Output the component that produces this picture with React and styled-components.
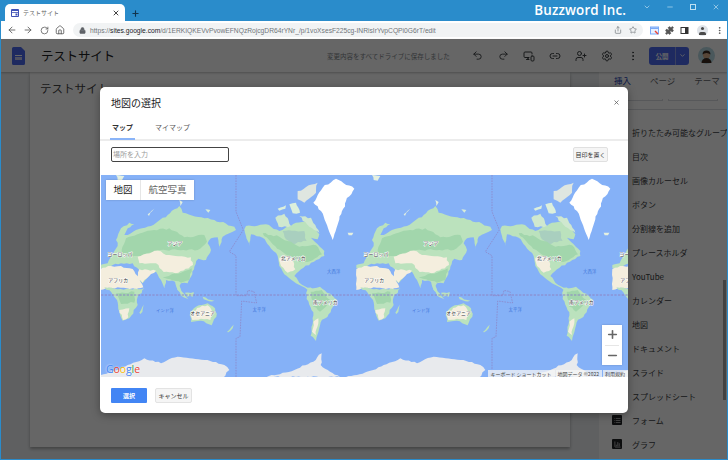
import React from "react";
import styled, { createGlobalStyle } from "styled-components";
import { ArrowLeft, ArrowRight, RotateCw, Home, Lock, Share, Star, Puzzle, Undo2, Redo2, MonitorSmartphone, Link2, UserPlus, Settings, MoreVertical, X, Plus, Minus, ChevronDown, List, BarChart3 } from "lucide-react";

const JP = `"Noto Sans CJK JP", "Noto Sans", "Liberation Sans", sans-serif`;

const Global = createGlobalStyle`
  html, body { margin: 0; padding: 0; width: 728px; height: 460px; overflow: hidden; background: #2a8ccb; }
  * { box-sizing: border-box; }
`;

const Win = styled.div`
  width: 728px; height: 460px; display: flex; flex-direction: column;
  border: solid #2a8ccb; border-width: 0 1px 1px 1px; font-family: ${JP}; overflow: hidden;
`;
const TitleBar = styled.div`
  height: 21px; flex: none; background: #2a8ccb; display: flex; align-items: flex-end; padding-left: 4px; color: #fff;
`;
const Tab = styled.div`
  width: 120px; height: 17px; background: #fff; border-radius: 5px 5px 0 0; display: flex; align-items: center; padding: 0 5px 0 6px; gap: 4px; color: #666; font-size: 6px;
`;
const TabIcon = styled.svg` width: 8px; height: 8px; flex: none; `;
const TabTitle = styled.span` flex: 1; `;
const NewTab = styled.div` margin: 5px 0 0 6px; align-self: center; display: flex; color: #12344d; `;
const Brand = styled.div`
  margin-left: auto; margin-right: 17px; align-self: flex-start; font: 600 13.4px/21px "Open Sans", sans-serif; letter-spacing: .15px; color: #fff;
`;
const WinControls = styled.div` display: flex; align-self: flex-start; margin-top: 3px; margin-right: 7px; gap: 15px; align-items: center; color: #bfe0f2; `;
const Toolbar = styled.div`
  height: 18px; flex: none; background: #fff; display: flex; align-items: center; padding: 0 3px; color: #555;
`;
const NavBtn = styled.div` width: 16px; display: flex; justify-content: center; color: #555; `;
const Omni = styled.div`
  width: 570px; height: 14px; margin: 0 7px 0 5px; background: #f1f3f4; border-radius: 7px; display: flex; align-items: center; padding: 0 6px; gap: 4px;
  font: 6.7px "Liberation Sans", sans-serif; color: #70757a; white-space: nowrap;
`;
const Url = styled.span` flex: 1; b { font-weight: 400; color: #202124; } `;
const OmniIcons = styled.span` display: flex; gap: 7px; align-items: center; `;
const ExtIcons = styled.div` display: flex; align-items: center; gap: 6px; `;
const Avatar = styled.span` width: 11px; height: 11px; border-radius: 50%; background: #dfe3e8; display: block; margin: 0 1px 0 2px; position: relative; overflow: hidden;
  &::after { content: ""; position: absolute; left: 2px; right: 2px; bottom: 1px; height: 3px; border-radius: 2px 2px 0 0; background: #4a4a4a; }
  &::before { content: ""; position: absolute; left: 4px; top: 2px; width: 3px; height: 3px; border-radius: 50%; background: #4a4a4a; }
`;

const Page = styled.div` flex: 1; position: relative; background: #fff; display: flex; flex-direction: column; min-height: 0; `;
const Header = styled.div`
  height: 33px; flex: none; background: #fff; display: flex; align-items: center; padding-left: 11px; box-shadow: 0 1px 2px rgba(0,0,0,.25); position: relative; z-index: 1;
`;
const DocIcon = styled.svg` width: 13px; height: 18px; flex: none; margin-right: 16px; `;
const SiteTitle = styled.div` font-size: 12.5px; color: #202124; width: 286px; letter-spacing: -.2px; `;
const Saved = styled.div` font-size: 6.5px; color: #80868b; width: 137px; white-space: nowrap; `;
const HeadIcons = styled.div` display: flex; width: 182px; color: #3c4043; `;
const HeadIcon = styled.div` width: 26px; display: flex; justify-content: center; `;
const Publish = styled.div`
  margin-left: 3px; width: 40px; height: 18px; background: #4c6af0; border-radius: 3px; display: flex; color: #fff; font-size: 6.5px; align-items: center;
`;
const PublishLabel = styled.span` width: 27px; text-align: center; border-right: 1px solid #8fa0e8; line-height: 18px; font-weight: 700; `;
const PublishArrow = styled.span` flex: 1; display: flex; justify-content: center; `;
const UserPic = styled.svg` width: 17px; height: 17px; margin-left: 9px; flex: none; `;

const Body = styled.div` flex: 1; display: flex; min-height: 0; background: #edf0f2; `;
const Canvas = styled.div`
  width: 540px; height: 375px; margin: 0 29px; background: #fff; padding: 8px 10px; font-size: 11.5px; color: #444; box-shadow: 0 2px 3px rgba(0,0,0,.3);
`;
const Sidebar = styled.div` flex: 1; background: #fff; padding-left: 13px; position: relative; min-width: 0; `;
const SideTabs = styled.div` display: flex; height: 30px; align-items: center; font-size: 8.5px; padding: 0 0 14px 2px; gap: 19px; white-space: nowrap; `;
const SideTab = styled.span` color: ${p => p.$active ? "#1a3fb0" : "#5f6368"}; `;
const Tiles = styled.div` height: 11px; display: flex; gap: 5px; margin-top: -3px; padding-right: 9px; border-bottom: 1px solid #dadce0; `;
const Tile = styled.div` flex: 1; height: 2px; border: solid #dadce0; border-width: 0 1px 1px 1px; `;
const SideList = styled.div` padding-top: 10px; `;
const SideRow = styled.div` height: 24px; display: flex; align-items: center; font-size: 8px; color: #3c4043; gap: 10px; white-space: nowrap; `;
const RowGlyph = styled.span` width: 10px; height: 10px; background: ${p => p.$blank ? "transparent" : "#202124"}; border-radius: 1px; flex: none; display: flex; align-items: center; justify-content: center; color: #fff; `;
const ScrollThumb = styled.div` position: absolute; right: 1px; top: 208px; width: 3px; height: 120px; background: #a6a6a6; `;

const Overlay = styled.div` position: absolute; inset: 0; background: rgba(0,0,0,.6); z-index: 2; padding: 48px 0 0 99px; `;
const Dialog = styled.div`
  width: 528px; height: 326px; background: #fff; border-radius: 5px; box-shadow: 0 2px 8px rgba(0,0,0,.35); display: flex; flex-direction: column; overflow: hidden; color: #202124;
`;
const DialogHead = styled.div` height: 31px; flex: none; display: flex; align-items: center; justify-content: space-between; padding: 0 8px 0 11px; font-size: 10px; `;
const CloseBtn = styled.span` display: flex; color: #555; `;
const Tabs = styled.div` height: 23px; flex: none; display: flex; gap: 20px; padding-left: 10px; border-bottom: 2px solid #ececec; font-size: 7px; white-space: nowrap; `;
const TabItem = styled.div`
  height: 22px; line-height: 18px; width: ${p => p.$w}px; text-align: center; font-weight: ${p => p.$active ? 700 : 400}; color: ${p => p.$active ? "#333" : "#555"};
  border-bottom: ${p => p.$active ? "2px solid #8ab4f8" : "0"};
`;
const SearchRow = styled.div` height: 34px; flex: none; display: flex; justify-content: space-between; padding: 6px 20px 0 11px; `;
const SearchBox = styled.div` width: 118px; height: 15px; border: 1.5px solid #444; border-radius: 2px; font-size: 7px; color: #999; line-height: 12px; padding-left: 1px; `;
const MarkBtn = styled.div` width: 35px; height: 15px; background: #f5f5f5; border: 1px solid #e0e0e0; border-radius: 2px; font-size: 6px; color: #333; text-align: center; line-height: 13px; white-space: nowrap; `;
const MapBox = styled.div` height: 202px; flex: none; margin-left: 1px; position: relative; background: #85b1f7; overflow: hidden; `;
const MapSvg = styled.svg` display: block; width: 527px; height: 202px; `;
const MapType = styled.div` position: absolute; left: 5px; top: 5px; height: 20px; width: 88px; background: #fff; display: flex; align-items: center; font-size: 9.5px; box-shadow: 0 0 2px rgba(0,0,0,.2); `;
const MapTypeItem = styled.div` height: 100%; line-height: 19px; text-align: center; width: ${p => p.$w}px; color: ${p => p.$active ? "#222" : "#666"}; border-right: ${p => p.$active ? "1px solid #e6e6e6" : "0"}; `;
const ZoomCtl = styled.div` position: absolute; right: 6px; top: 150px; width: 20px; height: 40px; background: #fff; display: flex; flex-direction: column; color: #666; box-shadow: 0 0 2px rgba(0,0,0,.2); `;
const ZoomBtn = styled.div` flex: 1; display: flex; align-items: center; justify-content: center; `;
const ZoomSep = styled.div` height: 1px; margin: 0 3px; background: #e6e6e6; `;
const GoogleLogo = styled.div` position: absolute; left: 5px; bottom: 1px; font: 400 10.5px/13px "Open Sans", sans-serif; letter-spacing: -.1px; text-shadow: 0 0 2px #fff; `;
const GL = styled.span` color: ${p => p.$c}; `;
const Attribution = styled.div` position: absolute; right: 0; bottom: 0; height: 7px; display: flex; font-size: 5px; line-height: 7px; color: #444; white-space: nowrap; gap: 1px; `;
const AttrItem = styled.span` background: rgba(245,245,245,.75); padding: 0 3px 0 2px; `;
const DialogFoot = styled.div` flex: 1; display: flex; gap: 8px; padding: 11px 0 0 11px; `;
const Primary = styled.div` width: 36px; height: 15px; background: #4285f4; border-radius: 1px; color: #fff; font-size: 6px; text-align: center; line-height: 15px; font-weight: 700; `;
const Secondary = styled.div` width: 37px; height: 15px; background: #f5f5f5; border: 1px solid #e3e3e3; border-radius: 2px; color: #333; font-size: 6px; text-align: center; line-height: 13px; `;

const LAND = "#bbe2bd", FOREST = "#a2d6ac", DESERT = "#f4eede", TUNDRA = "#a9cfbf", ICE = "#e8eaed";

/* turn a traced outline into a rough coastline: split each edge and nudge the points */
function coast(pts, ox = 0, oy = 0, amp = 2.5) {
  const out = [];
  for (let i = 0; i < pts.length; i++) {
    const [x1, y1] = pts[i], [x2, y2] = pts[(i + 1) % pts.length];
    const len = Math.hypot(x2 - x1, y2 - y1);
    const n = Math.max(1, Math.round(len / 9));
    for (let k = 0; k < n; k++) {
      const t = k / n, x = x1 + (x2 - x1) * t, y = y1 + (y2 - y1) * t;
      const w = Math.sin(x * 1.7 + y * 0.9) + Math.sin(x * 0.6 - y * 2.3);
      const nx = -(y2 - y1) / (len || 1), ny = (x2 - x1) / (len || 1);
      const a = k === 0 ? 0 : amp * w * 0.6;
      out.push(`${(x + nx * a + ox).toFixed(1)} ${(y + ny * a + oy).toFixed(1)}`);
    }
  }
  return "M" + out.join("L") + "Z";
}
const Shape = ({ f, pts, ox, oy, amp }) => <path d={coast(pts, ox, oy, amp)} fill={f} />;

const C1 = { ox: 0, oy: 75 }, C2 = { ox: 405, oy: 3 }, C3 = { ox: 0, oy: 315 }, Z4 = { ox: -3, oy: 0 };

const labels = [
  [222, 210, "アジア"], [57, 244, "ヨーロッパ"], [52, 322, "アフリカ"], [577, 256, "北アメリカ"],
  [673, 388, "南アメリカ"], [305, 419, "オセアニア"],
  [192, 412, "インド洋", 1], [475, 408, "太平洋", 1], [698, 295, "大西洋", 1],
];

const World = ({ dx }) => (
  <g transform={`translate(${dx} 0)`}>
    <Shape f={ICE} {...C3} pts={[[-60, 294], [0, 285], [40, 272], [80, 255], [130, 235], [180, 250], [230, 230], [310, 240], [370, 255], [385, 270], [365, 294]]} />
    <Shape f={ICE} {...Z4} pts={[[490, 606], [540, 598], [600, 578], [640, 560], [665, 535], [662, 570], [690, 590], [720, 606]]} />
    {/* Eurasia */}
    <Shape f={LAND} {...C1} pts={[[-2, 195], [20, 190], [30, 165], [50, 138], [45, 120], [60, 85], [85, 68], [100, 72], [80, 85], [70, 105], [90, 100], [105, 90], [150, 78], [200, 45], [235, 18], [245, 38], [310, 55], [340, 60], [400, 80], [405, 90], [385, 100], [365, 110], [356, 150], [350, 112], [330, 115], [320, 130], [330, 150], [315, 180], [292, 176], [280, 200], [270, 230], [260, 250], [240, 250], [235, 265], [245, 290], [230, 270], [222, 245], [195, 240], [190, 265], [180, 240], [165, 215], [150, 220], [125, 250], [105, 240], [115, 210], [95, 190], [60, 190], [35, 195], [15, 208], [-2, 205]]} />
    <Shape f={FOREST} {...C1} pts={[[62, 150], [75, 115], [140, 92], [205, 85], [250, 112], [310, 105], [318, 125], [290, 150], [230, 150], [170, 150], [110, 168], [70, 170]]} />
    <Shape f={DESERT} {...C1} pts={[[110, 170], [170, 152], [195, 165], [270, 172], [276, 195], [232, 218], [188, 216], [165, 190], [115, 190]]} />
    <Shape f={DESERT} {...C1} pts={[[115, 208], [165, 212], [150, 222], [125, 248], [108, 238]]} />
    <Shape f={FOREST} {...C1} pts={[[185, 232], [240, 218], [272, 205], [265, 240], [240, 248], [225, 243], [198, 236]]} />
    {/* Indonesia */}
    <Shape f={LAND} {...C3} pts={[[228, 10], [248, 40], [262, 58], [248, 52], [230, 30]]} />
    <Shape f={LAND} {...C3} pts={[[252, 38], [278, 36], [275, 50], [258, 50]]} />
    <Shape f={LAND} {...C3} pts={[[305, 50], [340, 62], [325, 64], [308, 58]]} />
    {/* arctic Eurasian islands */}
    <Shape f="#e4f0e0" {...C1} amp={1} pts={[[140, 43], [165, 22], [148, 38], [144, 48]]} />
    <Shape f="#e4f0e0" {...C1} amp={1.5} pts={[[45, -75], [70, -72], [62, -58], [50, -60]]} />
    <Shape f="#e4f0e0" {...C1} amp={1} pts={[[235, 0], [245, 6], [238, 18]]} />
    <Shape f="#d8ecd8" {...C1} amp={1} pts={[[313, 28], [328, 30], [322, 38]]} />
    <Shape f="#e4f0e0" {...C2} amp={1} pts={[[335, 170], [352, 170], [348, 178], [338, 178]]} />
    {/* Africa */}
    <Shape f={DESERT} {...C1} pts={[[-2, 207], [30, 198], [60, 198], [95, 207], [110, 228], [127, 262], [105, 268], [50, 262], [15, 265], [-2, 270]]} />
    <Shape f={LAND} {...C3} pts={[[10, 22], [50, 28], [130, 25], [110, 50], [110, 75], [85, 115], [65, 122], [55, 95], [48, 60], [32, 38]]} />
    <Shape f={FOREST} {...C3} pts={[[45, 40], [100, 35], [100, 68], [60, 72]]} />
    <Shape f={DESERT} {...C3} pts={[[55, 90], [85, 85], [82, 112], [66, 120]]} />
    <Shape f={LAND} {...C3} amp={1} pts={[[115, 98], [128, 74], [124, 96], [118, 102]]} />
    {/* Australia */}
    <Shape f={LAND} {...C3} pts={[[268, 96], [285, 80], [320, 70], [342, 85], [346, 110], [332, 136], [300, 122], [270, 126]]} />
    <Shape f={DESERT} {...C3} pts={[[272, 100], [288, 84], [320, 76], [334, 95], [328, 120], [300, 116], [274, 120]]} />
    <Shape f={LAND} {...C3} amp={.8} pts={[[378, 156], [398, 134], [395, 145], [382, 157]]} />
    {/* North America */}
    <Shape f={LAND} {...C2} pts={[[30, 150], [90, 145], [130, 165], [180, 140], [215, 135], [250, 175], [245, 190], [225, 185], [265, 225], [265, 240], [225, 260], [195, 280], [175, 300], [190, 320], [215, 335], [248, 345], [215, 342], [180, 322], [145, 295], [130, 270], [125, 240], [100, 210], [80, 185], [45, 175], [40, 210], [30, 180], [25, 160]]} />
    <Shape f={TUNDRA} {...C2} pts={[[140, 165], [205, 165], [212, 195], [170, 205], [150, 190]]} />
    <Shape f={FOREST} {...C2} pts={[[80, 172], [130, 182], [190, 212], [240, 208], [258, 235], [222, 256], [190, 258], [140, 228], [110, 205]]} />
    <Shape f={DESERT} {...C2} pts={[[130, 245], [165, 240], [178, 280], [155, 290], [135, 270]]} />
    {/* Arctic islands */}
    <Shape f="#cfe8cf" {...C2} pts={[[118, 125], [145, 113], [165, 150], [128, 152]]} />
    <Shape f="#dfe6e0" {...C2} pts={[[185, 45], [245, 20], [240, 50], [205, 80], [185, 70]]} />
    <Shape f="#dcefdc" {...C2} pts={[[160, 85], [180, 80], [192, 110], [170, 112]]} />
    <Shape f="#dcefdc" {...C2} amp={1} pts={[[125, 98], [150, 88], [148, 98], [130, 104]]} />
    <Shape f="#cfe8cf" {...C2} pts={[[190, 120], [225, 125], [250, 170], [220, 152]]} />
    {/* Greenland */}
    <Shape f="#ffffff" {...C2} pts={[[232, 80], [260, 35], [300, 8], [355, 38], [330, 75], [310, 130], [290, 192], [270, 140], [255, 105]]} />
    {/* South America */}
    <Shape f={LAND} {...Z4} pts={[[622, 345], [660, 335], [712, 375], [692, 412], [662, 442], [648, 498], [632, 482], [640, 412], [620, 372]]} />
    <Shape f={FOREST} {...Z4} pts={[[632, 350], [665, 345], [695, 380], [660, 410], [640, 395]]} />
    <Shape f={DESERT} {...Z4} pts={[[640, 440], [655, 430], [648, 480], [636, 470]]} />
    {/* Boundaries */}
    <path d="M405 0 L405 110 L427 165 L385 230 L405 242 L405 362 L437 362 L441 346 L459 350 L467 384 L422 378 L417 485 L405 490 L405 606" fill="none" stroke="#8d84c4" strokeWidth="2.2" strokeDasharray="5 3" />
  </g>
);

const MapLabel = ({ x, y, blue, children }) => (
  <text x={x} y={y} textAnchor="middle" fontSize={blue ? 13 : 14.5} fontFamily={JP} fill={blue ? "#3f72d8" : "#333"}
    stroke={blue ? "none" : "#fff"} strokeWidth={blue ? 0 : 3} paintOrder="stroke" letterSpacing="0.5">{children}</text>
);

const sideItems = ["折りたたみ可能なグループ", "目次", "画像カルーセル", "ボタン", "分割線を追加", "プレースホルダ", "YouTube", "カレンダー", "地図", "ドキュメント", "スライド", "スプレッドシート"];

export default function App() {
  return (
    <>
      <Global />
      <Win>
        <TitleBar>
          <Tab>
            <TabIcon viewBox="0 0 8 8"><rect width="8" height="8" rx="1" fill="#3f51b5" /><rect x="1" y="2" width="6" height="1.2" fill="#fff" /><rect x="1" y="4" width="6" height="3" fill="#fff" /><rect x="4.5" y="4.5" width="2" height="2" fill="#3f51b5" /></TabIcon>
            <TabTitle>テストサイト</TabTitle>
            <X size={8} color="#444" strokeWidth={3} />
          </Tab>
          <NewTab><Plus size={9} strokeWidth={3} /></NewTab>
          <Brand>Buzzword Inc.</Brand>
          <WinControls>
            <ChevronDown size={8} />
            <Minus size={8} />
            <svg width="8" height="8" viewBox="0 0 8 8"><rect x="1.5" y="1.5" width="5" height="5" fill="none" stroke="#bfe0f2" /></svg>
            <X size={8} />
          </WinControls>
        </TitleBar>
        <Toolbar>
          <NavBtn><ArrowLeft size={10} /></NavBtn>
          <NavBtn><ArrowRight size={10} /></NavBtn>
          <NavBtn><RotateCw size={9} /></NavBtn>
          <NavBtn><Home size={10} /></NavBtn>
          <Omni>
            <Lock size={7} fill="#5f6368" color="#5f6368" />
            <Url>https://<b>sites.google.com</b>/d/1ERKIQKEVvPvowEFNQzRojcgDR64rYNr_/p/1voXsesF225cg-INRisIrYvpCQPi0G6rT/edit</Url>
            <OmniIcons><Share size={8} /><Star size={8} /></OmniIcons>
          </Omni>
          <ExtIcons>
            <svg width="9" height="9" viewBox="0 0 9 9"><rect x=".5" y="1" width="8" height="7" fill="#e8f0fe" stroke="#7baaf7" /><rect x="1" y="1.5" width="7" height="1.5" fill="#7baaf7" /><path d="M5 5l3 3" stroke="#ea4335" strokeWidth="1.4" /></svg>
            <Puzzle size={9} fill="#555" color="#555" />
            <svg width="9" height="9" viewBox="0 0 9 9"><rect x="1" y="1.5" width="7" height="6" fill="none" stroke="#333" /><rect x="5" y="1.5" width="3" height="6" fill="#333" /></svg>
            <Avatar />
            <MoreVertical size={9} color="#444" />
          </ExtIcons>
        </Toolbar>
        <Page>
          <Header>
            <DocIcon viewBox="0 0 13 18"><path d="M1.5 0H9l4 4v12.5a1.5 1.5 0 0 1-1.5 1.5h-10A1.5 1.5 0 0 1 0 16.5v-15A1.5 1.5 0 0 1 1.5 0z" fill="#4c6af0" /><rect x="3" y="8" width="7" height="1" fill="#fff" /><rect x="3" y="10" width="7" height="3" fill="#c5cbf0" /></DocIcon>
            <SiteTitle>テストサイト</SiteTitle>
            <Saved>変更内容をすべてドライブに保存しました</Saved>
            <HeadIcons>
              <HeadIcon><Undo2 size={11} /></HeadIcon>
              <HeadIcon><Redo2 size={11} /></HeadIcon>
              <HeadIcon><MonitorSmartphone size={12} /></HeadIcon>
              <HeadIcon><Link2 size={12} /></HeadIcon>
              <HeadIcon><UserPlus size={12} /></HeadIcon>
              <HeadIcon><Settings size={12} /></HeadIcon>
              <HeadIcon><MoreVertical size={12} /></HeadIcon>
            </HeadIcons>
            <Publish>
              <PublishLabel>公開</PublishLabel>
              <PublishArrow><ChevronDown size={7} strokeWidth={3} /></PublishArrow>
            </Publish>
            <UserPic viewBox="0 0 17 17"><circle cx="8.5" cy="8.5" r="8.5" fill="#b9dbe6" /><circle cx="8.5" cy="8" r="3.6" fill="#d9b08c" /><path d="M4.5 7.5a4 4 0 0 1 8 0 6 6 0 0 0-8 0z" fill="#3a2a20" /><path d="M3.5 16a5 5 0 0 1 10 0z" fill="#3a2a20" /></UserPic>
          </Header>
          <Body>
            <Canvas>テストサイト</Canvas>
            <Sidebar>
              <SideTabs>
                <SideTab $active>挿入</SideTab>
                <SideTab>ページ</SideTab>
                <SideTab>テーマ</SideTab>
              </SideTabs>
              <Tiles><Tile /><Tile /></Tiles>
              <SideList>
                {sideItems.map(t => <SideRow key={t}><RowGlyph $blank />{t}</SideRow>)}
                <SideRow><RowGlyph><List size={7} /></RowGlyph>フォーム</SideRow>
                <SideRow><RowGlyph><BarChart3 size={7} /></RowGlyph>グラフ</SideRow>
              </SideList>
              <ScrollThumb />
            </Sidebar>
          </Body>
          <Overlay>
            <Dialog>
              <DialogHead>地図の選択<CloseBtn><X size={7} strokeWidth={2.5} /></CloseBtn></DialogHead>
              <Tabs>
                <TabItem $active $w={25}>マップ</TabItem>
                <TabItem $w={35}>マイマップ</TabItem>
              </Tabs>
              <SearchRow>
                <SearchBox>場所を入力</SearchBox>
                <MarkBtn>目印を置く</MarkBtn>
              </SearchRow>
              <MapBox>
                <MapSvg viewBox="0 0 1581 606">
                  <defs><filter id="soft" x="-5%" y="-5%" width="110%" height="110%"><feGaussianBlur stdDeviation="1.8" /></filter></defs>
                  <rect width="1581" height="606" fill="#85b1f7" />
                  <g filter="url(#soft)">
                    <World dx={-768} />
                    <World dx={0} />
                    <World dx={768} />
                    <World dx={1536} />
                    <line x1="0" x2="1600" y1="360" y2="360" stroke="#8d84c4" strokeWidth="3" strokeDasharray="7 4" />
                  </g>
                  {[0, 768, 1536].flatMap(dx => labels.filter(l => l[0] + dx < 1600).map(([x, y, t, blue]) => (
                    <MapLabel key={`${dx}${t}`} x={x + dx} y={y} blue={blue}>{t}</MapLabel>
                  )))}
                </MapSvg>
                <MapType>
                  <MapTypeItem $active $w={35}>地図</MapTypeItem>
                  <MapTypeItem $w={53}>航空写真</MapTypeItem>
                </MapType>
                <ZoomCtl>
                  <ZoomBtn><Plus size={13} strokeWidth={3} /></ZoomBtn>
                  <ZoomSep />
                  <ZoomBtn><Minus size={13} strokeWidth={3} /></ZoomBtn>
                </ZoomCtl>
                <GoogleLogo>
                  <GL $c="#4285f4">G</GL><GL $c="#ea4335">o</GL><GL $c="#fbbc05">o</GL><GL $c="#4285f4">g</GL><GL $c="#34a853">l</GL><GL $c="#ea4335">e</GL>
                </GoogleLogo>
                <Attribution>
                  <AttrItem>キーボード ショートカット</AttrItem>
                  <AttrItem>地図データ ©2022</AttrItem>
                  <AttrItem>利用規約</AttrItem>
                </Attribution>
              </MapBox>
              <DialogFoot>
                <Primary>選択</Primary>
                <Secondary>キャンセル</Secondary>
              </DialogFoot>
            </Dialog>
          </Overlay>
        </Page>
      </Win>
    </>
  );
}
